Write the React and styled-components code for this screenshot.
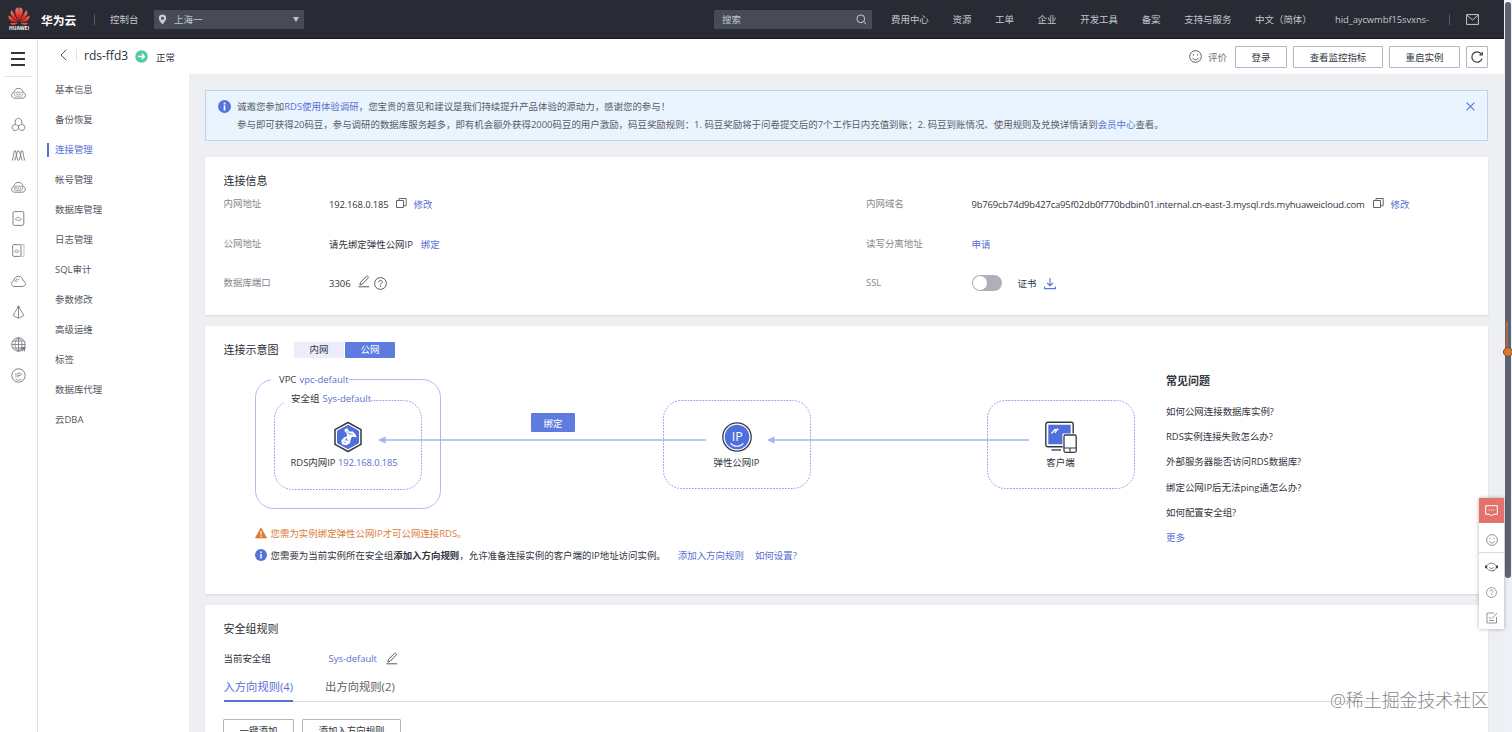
import React, { useState } from 'react';

// Libs
import styled, { createGlobalStyle, css } from 'styled-components';

const GlobalStyle = createGlobalStyle`
    * {
        box-sizing: border-box;
    }
    body {
        margin: 0;
        overflow: hidden;
        font-family: "Open Sans", "Noto Sans CJK SC", sans-serif;
        font-size: 9.45px;
        color: #32353d;
    }
    svg {
        display: block;
        flex: none;
    }
    button {
        font-family: inherit;
        padding: 0;
    }
`;

const navItems = ['费用中心', '资源', '工单', '企业', '开发工具', '备案', '支持与服务', '中文（简体）'];

const menuItems = [
    '基本信息', '备份恢复', '连接管理', '帐号管理', '数据库管理', '日志管理',
    'SQL审计', '参数修改', '高级运维', '标签', '数据库代理', '云DBA',
];

const questions = [
    '如何公网连接数据库实例?',
    'RDS实例连接失败怎么办?',
    '外部服务器能否访问RDS数据库?',
    '绑定公网IP后无法ping通怎么办?',
    '如何配置安全组?',
];

// Icons
const Icon = ({ w = 14, h = w, box, color = 'currentColor', sw = 1, children }) => (
    <svg width={w} height={h} viewBox={box || `0 0 ${w} ${h}`} fill="none" stroke={color} strokeWidth={sw}>
        {children}
    </svg>
);

const HuaweiLogo = () => (
    <svg width="22" height="24" viewBox="0 0 22 24">
        <defs>
            <linearGradient id="petal" x1="0" y1="0" x2="0" y2="1">
                <stop offset="0" stopColor="#f4866a" />
                <stop offset="0.6" stopColor="#dc3426" />
                <stop offset="1" stopColor="#c8201c" />
            </linearGradient>
        </defs>
        <g fill="url(#petal)">
            <path d="M10.6 14.6C8.4 10 7.2 6.5 7.3 3.6C7.4 1.8 8.7 .6 10.3 .5C11 3 11.2 9 10.6 14.6Z" />
            <path d="M11.4 14.6C13.6 10 14.8 6.5 14.7 3.6C14.6 1.8 13.3 .6 11.7 .5C11 3 10.8 9 11.4 14.6Z" />
            <path d="M9.9 15C8.5 11 6.3 6.8 3.7 3.2C2.4 4.5 2.3 6.2 3 7.7C4.3 10.3 6.9 13 9.9 15Z" />
            <path d="M12.1 15C13.5 11 15.7 6.8 18.3 3.2C19.6 4.5 19.7 6.2 19 7.7C17.7 10.3 15.1 13 12.1 15Z" />
            <path d="M9.4 15.6C6.8 13 3.9 10.4 .8 8.6C.2 10.2 .6 12.2 2.2 13.4C4 14.8 6.5 15.4 9.4 15.6Z" />
            <path d="M12.6 15.6C15.2 13 18.1 10.4 21.2 8.6C21.8 10.2 21.4 12.2 19.8 13.4C18 14.8 15.5 15.4 12.6 15.6Z" />
            <path d="M9.3 16.3H2C2.6 17.5 3.8 18.2 5.2 18.2C6.8 18.2 8.2 17.3 9.3 16.3Z" />
            <path d="M12.7 16.3H20C19.4 17.5 18.2 18.2 16.8 18.2C15.2 18.2 13.8 17.3 12.7 16.3Z" />
        </g>
        <text x="11" y="23" fill="#fff" fontSize="4.9" fontWeight="700" textAnchor="middle" textLength="20">HUAWEI</text>
    </svg>
);

const PinIcon = () => (
    <svg width="9" height="11" viewBox="0 0 9 11">
        <path fill="#c8cbd2" fillRule="evenodd" d="M4.5 .5A3.7 3.7 0 0 0 .8 4.2C.8 6.6 3 8.3 4.5 10.5C6 8.3 8.2 6.6 8.2 4.2A3.7 3.7 0 0 0 4.5 .5ZM4.5 2.7A1.5 1.5 0 1 1 4.5 5.7A1.5 1.5 0 0 1 4.5 2.7Z" />
    </svg>
);

const InfoIcon = ({ size = 12 }) => (
    <svg width={size} height={size} viewBox="0 0 12 12">
        <circle cx="6" cy="6" r="6" fill="#5573d9" />
        <path d="M6 2.4v1.7M6 5v4.6" stroke="#fff" strokeWidth="1.5" />
    </svg>
);

const WarnIcon = () => (
    <svg width="12" height="12" viewBox="0 0 12 12">
        <path d="M6 .8L11.7 11H.3Z" fill="#dd7a34" stroke="#dd7a34" strokeWidth=".6" strokeLinejoin="round" />
        <path d="M6 4v3.8M6 8.6v1.3" stroke="#fff" strokeWidth="1.2" />
    </svg>
);

const CopyIcon = () => (
    <Icon w={11} h={12} color="#62656d">
        <path d="M.5 3.5H7.5V10.5H.5Z" />
        <path d="M3 3.3V1.5H10.2V8.7H7.7" />
    </Icon>
);

const PencilIcon = () => (
    <Icon w={12} h={13} color="#575a63">
        <path d="M1.8 10L2.6 7.2L8.3 1.5C8.8 1 9.5 1 10 1.5C10.5 2 10.5 2.7 10 3.2L4.5 9L1.8 10Z" />
        <path d="M.5 11.8H11.2" />
    </Icon>
);

const HelpIcon = ({ size = 13, color = '#575a63' }) => (
    <Icon w={size} box="0 0 13 13" color={color}>
        <circle cx="6.5" cy="6.5" r="5.9" />
        <path d="M4.7 5.2C4.7 4 5.5 3.4 6.5 3.4C7.6 3.4 8.3 4.1 8.3 5C8.3 6.3 6.5 6.3 6.5 7.8M6.5 8.7V9.9" />
    </Icon>
);

const SmileIcon = ({ size = 12, color = '#575a63' }) => (
    <Icon w={size} box="0 0 12 12" color={color} sw={0.9}>
        <circle cx="6" cy="6" r="5.4" />
        <path d="M4 3.8v1.4M8 3.8v1.4M3.3 7.2C3.9 8.5 4.9 9 6 9C7.1 9 8.1 8.5 8.7 7.2" />
    </Icon>
);

const DownloadIcon = () => (
    <Icon w={12} h={13} color="#5573d9" sw={1.1}>
        <path d="M6 1V8.7M3.2 6L6 8.8L8.8 6M.7 9.5V11.6H11.3V9.5" />
    </Icon>
);

const railIcons = [
    // cloud servers
    <g key="ecs">
        <path d="M4 12.2C1.6 12.2 .6 10.6 .6 9.2C.6 7.6 1.8 6.6 2.9 6.4C3.2 4 5.2 2.3 7.5 2.3C9.8 2.3 11.8 4 12.1 6.4C13.2 6.6 14.4 7.6 14.4 9.2C14.4 10.6 13.4 12.2 11 12.2Z" />
        <path d="M5 6.2H10C11 6.2 11.5 7.2 11.5 8.2S11 10.2 10 10.2H5C4 10.2 3.5 9.2 3.5 8.2S4 6.2 5 6.2ZM5 8.2H10" strokeWidth=".6" />
    </g>,
    // three joined circles
    <g key="cluster">
        <path d="M5 7.6C4 6.5 4 5 4.3 4C4.9 2.2 6 1.3 7.5 1.3S10.1 2.2 10.7 4C11 5 11 6.5 10 7.6" />
        <path d="M5 7.6C2.6 7 1.1 8.8 1.1 10.4C1.1 12.2 2.5 13.5 4.2 13.5S7.5 12.2 7.5 10.4V8.8M10 7.6C12.4 7 13.9 8.8 13.9 10.4C13.9 12.2 12.5 13.5 10.8 13.5S7.5 12.2 7.5 10.4M5.6 8L7.5 8.9L9.4 8" />
    </g>,
    // waves
    <g key="waves">
        <path d="M.7 12.5C2.5 12.5 2.5 2.5 4 2.5S5.5 12.5 7.5 12.5S9.5 2.5 11 2.5S12.5 12.5 14.3 12.5" />
        <path d="M3 12.5C5 12.5 5.5 2.5 7.3 2.5S10 12.5 12 12.5" />
    </g>,
    <g key="rds">
        <path d="M4 12.2C1.6 12.2 .6 10.6 .6 9.2C.6 7.6 1.8 6.6 2.9 6.4C3.2 4 5.2 2.3 7.5 2.3C9.8 2.3 11.8 4 12.1 6.4C13.2 6.6 14.4 7.6 14.4 9.2C14.4 10.6 13.4 12.2 11 12.2Z" />
        <path d="M5 6.2H10C12.2 6.2 12.2 10.2 10 10.2H5C2.8 10.2 2.8 6.2 5 6.2ZM5 7.2V9.2M7 7.2V9.2M9.3 7.2V9.2" strokeWidth=".7" />
    </g>,
    <g key="bms">
        <rect x="2" y=".6" width="10.8" height="13.8" rx="1.5" />
        <path d="M5.4 9.2C4.2 9.2 4.3 7.5 5.4 7.4C5.9 5.7 8.9 5.7 9.4 7.4C10.5 7.5 10.6 9.2 9.4 9.2Z" strokeWidth=".7" />
    </g>,
    <g key="deh">
        <rect x="1.7" y="1.6" width="8.3" height="11.8" rx="1.2" />
        <path d="M4.2 9.2C3.4 9.2 3.4 7.8 4.3 7.7C4.6 6.4 6.8 6.4 7.1 7.7C8 7.8 8 9.2 7.2 9.2Z" strokeWidth=".7" />
        <path d="M10.5 1.6H13V13.4H10.5" strokeDasharray="1.5 .7" strokeWidth=".7" />
    </g>,
    <g key="cloud">
        <path d="M4 12.5C1.6 12.5 .6 10.9 .6 9.5C.6 7.9 1.8 6.9 2.9 6.7C3.2 4 5.2 2.3 7.5 2.3C9.8 2.3 11.8 4 12.1 6.7C13.2 6.9 14.4 7.9 14.4 9.5C14.4 10.9 13.4 12.5 11 12.5Z" />
        <path d="M4.5 7.5C4.6 6 5.5 5.2 6.6 5M5.5 7.8L6.3 7M7 6.3L8.5 4.8" />
    </g>,
    <g key="pyramid">
        <path d="M7.5 1.5L2 10.5L7.5 13.3L13 10.5ZM7.5 1.5V13.3" strokeWidth=".8" />
        <path d="M7.5 .8V3" strokeWidth="2" />
    </g>,
    <g key="globe">
        <circle cx="7.5" cy="7.5" r="6.7" />
        <path d="M7.5 .8V14.2M.8 7.5H14.2M1.8 4H13.2M1.8 11H13.2M7.5 .8C2.8 4 2.8 11 7.5 14.2C12.2 11 12.2 4 7.5 .8" strokeWidth=".8" />
        <path d="M10.5 10L11.3 13L12.3 10.8L13.3 13L14.2 10" strokeWidth="1.2" />
    </g>,
    <g key="ip">
        <circle cx="7.5" cy="7.5" r="6.7" />
        <path d="M5 5V9.5M7 9.5V5H9C10.8 5 10.8 7.6 9 7.6H7M4.5 11.3C6.5 12.3 8.5 12.3 10.5 11.3" strokeWidth=".7" />
    </g>,
];

const RdsIcon = () => (
    <svg width="30" height="32" viewBox="0 0 30 32">
        <path d="M15 1.5L28 8.6V23.4L15 30.5L2 23.4V8.6Z" fill="#fff" stroke="#343944" strokeWidth="1.5" strokeLinejoin="round" />
        <path d="M15 4.3L25.5 10V22L15 27.7L4.5 22V10Z" fill="#4f70dc" stroke="#4f70dc" strokeLinejoin="round" />
        <path d="M11.7 8L14.5 7.3L16 10.5L19.8 10.6L22.6 13.5L23.8 16.2L19 15.7L17.8 18L17 22L13.5 24.2L9 23.2L8.3 19.5L11 16.5L14.2 15.2L13.5 12L11.7 10.5Z" fill="#fff" />
        <path d="M13.5 10L17 13.5M15.5 13H20M10.5 20.5L13 22M12 18L15.5 19.5M13.8 17L12.6 20" stroke="#4f70dc" strokeWidth=".7" />
    </svg>
);

const EipIcon = () => (
    <svg width="30" height="32" viewBox="0 0 30 32">
        <circle cx="15" cy="16" r="14.2" fill="#fff" stroke="#343944" strokeWidth="1.3" />
        <circle cx="15" cy="16" r="12.3" fill="#4f70dc" />
        <text x="15.2" y="20" fontSize="12.5" fill="#fff" textAnchor="middle">IP</text>
        <path d="M8.5 22.3C12 26.2 18 26.2 21.5 22.3" fill="none" stroke="#fff" strokeWidth="1.2" />
    </svg>
);

const ClientIcon = () => (
    <svg width="32" height="32" viewBox="0 0 32 32">
        <rect x=".8" y="1.3" width="27.4" height="24.5" rx="2" fill="#fff" stroke="#343944" strokeWidth="1.4" />
        <path d="M3.3 3.8H25.7V13H17.5V23.3H3.3Z" fill="#4f70dc" />
        <path d="M6.5 12.5L10 8.5L11 9.5M10 12L12.5 8L13.2 9" stroke="#fff" strokeWidth="1.3" fill="none" />
        <path d="M6.5 29H16" stroke="#343944" strokeWidth="1.3" />
        <path d="M17.8 12.5H32V32H17.8Z" fill="#fff" />
        <rect x="19" y="14" width="12.2" height="17.3" rx="1.5" fill="#fff" stroke="#343944" strokeWidth="1.3" />
        <path d="M19 27H31.2M25 27V31" stroke="#343944" strokeWidth="1.1" />
    </svg>
);

const Arrow = ({ length }) => (
    <svg width={length} height="8" viewBox={`0 0 ${length} 8`}>
        <path d={`M6 4H${length}`} stroke="#a3b5f3" strokeWidth="1.4" />
        <path d="M0 4L7.5 .5V7.5Z" fill="#9fb2f3" />
    </svg>
);

const Outline = ({ w, h, dashed }) => (
    <svg width={w} height={h}>
        <rect
            x=".5"
            y=".5"
            width={w - 1}
            height={h - 1}
            rx="18"
            fill="none"
            stroke={dashed ? '#8f9fe6' : '#aebbf3'}
            strokeDasharray={dashed ? '1.7 1.3' : undefined}
        />
    </svg>
);

const Header = () => (
    <StyledHeader>
        <HuaweiLogo />
        <StyledBrand>华为云</StyledBrand>
        <StyledHeaderDivider />
        <StyledConsole>控制台</StyledConsole>
        <StyledRegion>
            <PinIcon />
            <span>上海一</span>
            <StyledCaret />
        </StyledRegion>
        <StyledSearch>
            <span>搜索</span>
            <Icon w={11} color="#c8cbd2"><circle cx="4.8" cy="4.8" r="3.9" /><path d="M7.6 7.6L10.3 10.3" /></Icon>
        </StyledSearch>
        <StyledNav>
            {navItems.map(item => <span key={item}>{item}</span>)}
        </StyledNav>
        <StyledUser>hid_aycwmbf15svxns-</StyledUser>
        <StyledHeaderDivider />
        <StyledMail>
            <Icon w={13} h={11} color="#c8cbd2"><path d="M.6 .6H12.4V10.4H.6ZM.9 1.2L6.5 6L12.1 1.2" /></Icon>
        </StyledMail>
    </StyledHeader>
);

const TitleBar = () => (
    <StyledTitleBar>
        <StyledBack>
            <Icon w={7} h={12} color="#4b4e57"><path d="M6.3 .8L1 6L6.3 11.2" /></Icon>
        </StyledBack>
        <StyledInstance>rds-ffd3</StyledInstance>
        <svg width="13" height="13" viewBox="0 0 13 13">
            <circle cx="6.5" cy="6.5" r="6.2" fill="#4fcb9c" />
            <path d="M3 6.5H9.6M6.8 3.7L9.6 6.5L6.8 9.3" fill="none" stroke="#fff" strokeWidth="1.3" />
        </svg>
        <StyledStatus>正常</StyledStatus>
        <SmileIcon size={13} />
        <StyledRate>评价</StyledRate>
        <StyledActions>
            <StyledOutlineButton $width={52}>登录</StyledOutlineButton>
            <StyledOutlineButton $width={90}>查看监控指标</StyledOutlineButton>
            <StyledOutlineButton $width={71}>重启实例</StyledOutlineButton>
            <StyledOutlineButton $width={22}>
                <Icon w={14} color="#32353d" sw={1.2}>
                    <path d="M12 8.6A5.2 5.2 0 1 1 11.2 3.9" />
                    <path d="M12.2 2V4.8H9.4" />
                </Icon>
            </StyledOutlineButton>
        </StyledActions>
    </StyledTitleBar>
);

const Notice = () => (
    <StyledNotice>
        <InfoIcon size={13} />
        <StyledNoticeText>
            <div>诚邀您参加<StyledLink>RDS使用体验调研</StyledLink>，您宝贵的意见和建议是我们持续提升产品体验的源动力，感谢您的参与！</div>
            <div>参与即可获得20码豆，参与调研的数据库服务越多，即有机会额外获得2000码豆的用户激励，码豆奖励规则：1. 码豆奖励将于问卷提交后的7个工作日内充值到账；2. 码豆到账情况、使用规则及兑换详情请到<StyledLink>会员中心</StyledLink>查看。</div>
        </StyledNoticeText>
        <StyledClose>
            <Icon w={9} color="#5573d9" sw={1.1}><path d="M.6 .6L8.4 8.4M8.4 .6L.6 8.4" /></Icon>
        </StyledClose>
    </StyledNotice>
);

const ConnectionInfo = () => (
    <StyledCard $height={158}>
        <StyledCardTitle>连接信息</StyledCardTitle>
        <StyledInfoGrid>
            <StyledLabel>内网地址</StyledLabel>
            <StyledValue><StyledTight>192.168.0.185</StyledTight><StyledGap $w={7} /><StyledLift><CopyIcon /></StyledLift><StyledGap $w={7} /><StyledLink>修改</StyledLink></StyledValue>
            <StyledLabel>内网域名</StyledLabel>
            <StyledValue><StyledDomain>9b769cb74d9b427ca95f02db0f770bdbin01.internal.cn-east-3.mysql.rds.myhuaweicloud.com</StyledDomain><StyledLift><CopyIcon /></StyledLift><StyledGap $w={7} /><StyledLink>修改</StyledLink></StyledValue>

            <StyledLabel>公网地址</StyledLabel>
            <StyledValue>请先绑定弹性公网IP<StyledGap $w={8} /><StyledLink>绑定</StyledLink></StyledValue>
            <StyledLabel>读写分离地址</StyledLabel>
            <StyledValue><StyledLink>申请</StyledLink></StyledValue>

            <StyledLabel>数据库端口</StyledLabel>
            <StyledValue>3306<StyledGap $w={7} /><StyledLift><PencilIcon /></StyledLift><StyledGap $w={4} /><HelpIcon /></StyledValue>
            <StyledLabel>SSL</StyledLabel>
            <StyledValue><StyledSwitch /><StyledGap $w={16} />证书<StyledGap $w={8} /><DownloadIcon /></StyledValue>
        </StyledInfoGrid>
    </StyledCard>
);

const Diagram = () => {
    const [network, setNetwork] = useState('公网');

    return (
        <StyledCard $height={268}>
            <StyledDiagramHead>
                <StyledCardTitle>连接示意图</StyledCardTitle>
                <StyledSegment>
                    {['内网', '公网'].map(name => (
                        <StyledSegmentButton key={name} $active={name === network} onClick={() => setNetwork(name)}>{name}</StyledSegmentButton>
                    ))}
                </StyledSegment>
            </StyledDiagramHead>
            <StyledDiagramBody>
                <div>
                    <StyledCanvas>
                        <StyledPlaced $x={31} $y={9}><Outline w={186} h={130} /></StyledPlaced>
                        <StyledBoxLabel $x={47} $y={3} $pad={8}>VPC <StyledLink>vpc-default</StyledLink></StyledBoxLabel>
                        <StyledPlaced $x={50} $y={30}><Outline w={148} h={90} dashed /></StyledPlaced>
                        <StyledBoxLabel $x={60} $y={22} $pad={7}>安全组 <StyledLink>Sys-default</StyledLink></StyledBoxLabel>
                        <StyledPlaced $x={439} $y={30}><Outline w={148} h={89} dashed /></StyledPlaced>
                        <StyledPlaced $x={763} $y={30}><Outline w={148} h={89} dashed /></StyledPlaced>
                        <StyledNode $x={53} $y={51} $shift={-7}><RdsIcon /><span>RDS内网IP <StyledLink><StyledTight>192.168.0.185</StyledTight></StyledLink></span></StyledNode>
                        <StyledNode $x={442} $y={51}><EipIcon /><span>弹性公网IP</span></StyledNode>
                        <StyledNode $x={766} $y={51}><ClientIcon /><span>客户端</span></StyledNode>
                        <StyledPlaced $x={154} $y={66}><Arrow length={328} /></StyledPlaced>
                        <StyledPlaced $x={543} $y={66}><Arrow length={262} /></StyledPlaced>
                        <StyledBindButton $x={307} $y={43}>绑定</StyledBindButton>
                    </StyledCanvas>
                    <StyledTip $warn><WarnIcon />您需为实例绑定弹性公网IP才可公网连接RDS。</StyledTip>
                    <StyledTip>
                        <InfoIcon />
                        <span>您需要为当前实例所在安全组<b>添加入方向规则</b>，允许准备连接实例的客户端的IP地址访问实例。</span>
                        <StyledTipLinks>
                            <StyledLink>添加入方向规则</StyledLink>
                            <StyledLink>如何设置?</StyledLink>
                        </StyledTipLinks>
                    </StyledTip>
                </div>
                <StyledFaq>
                    <StyledFaqTitle>常见问题</StyledFaqTitle>
                    {questions.map(question => <StyledQuestion key={question}>{question}</StyledQuestion>)}
                    <StyledQuestion><StyledLink>更多</StyledLink></StyledQuestion>
                </StyledFaq>
            </StyledDiagramBody>
        </StyledCard>
    );
};

const SecurityRules = () => {
    const [tab, setTab] = useState(0);

    return (
        <StyledCard $height={200}>
            <StyledCardTitle>安全组规则</StyledCardTitle>
            <StyledGroupRow>
                <StyledGroupLabel>当前安全组</StyledGroupLabel>
                <StyledLink>Sys-default</StyledLink>
                <StyledGap $w={9} />
                <PencilIcon />
            </StyledGroupRow>
            <StyledTabs>
                {['入方向规则(4)', '出方向规则(2)'].map((name, i) => (
                    <StyledTab key={name} $active={i === tab} onClick={() => setTab(i)}>{name}</StyledTab>
                ))}
            </StyledTabs>
            <StyledRuleActions>
                <StyledOutlineButton $width={71}>一键添加</StyledOutlineButton>
                <StyledOutlineButton $width={99}>添加入方向规则</StyledOutlineButton>
            </StyledRuleActions>
        </StyledCard>
    );
};

const FloatTools = () => (
    <StyledFloat>
        <StyledFloatItem $hot>
            <Icon w={13} h={12} color="#fff"><path d="M.7 .7H12.3V9.3H8L6.5 11L5 9.3H.7Z" /><path d="M3.5 5H4.7M5.9 5H7.1M8.3 5H9.5" /></Icon>
        </StyledFloatItem>
        <StyledFloatItem $h={30} $top={4} $line><SmileIcon size={12} color="#85888f" /></StyledFloatItem>
        <StyledFloatItem $h={27}>
            <Icon w={13} h={12} color="#6c6f77" sw={0.9}>
                <path d="M1.5 6C3 .8 10 .8 11.500 6C10 11 3 11 1.500 6Z" />
                <path d="M4.300 6.300C5.300 7.900 7.700 7.900 8.700 6.300M9.800 8.700L7.500 10.600" />
                <path d="M1 4.500V7.300M12 4.500V7.300" strokeWidth="1.800" stroke="#32353d" />
            </Icon>
        </StyledFloatItem>
        <StyledFloatItem><HelpIcon size={11} color="#85888f" /></StyledFloatItem>
        <StyledFloatItem>
            <Icon w={12} h={12} color="#85888f" sw={0.9}><path d="M8 1H1V11H10.500V5M6 6.500L11 1M3 6H5M3 8.500H8" /></Icon>
        </StyledFloatItem>
    </StyledFloat>
);

const App = () => {
    const [active, setActive] = useState('连接管理');

    return (
        <StyledPage>
            <GlobalStyle />
            <StyledMain>
                <Header />
                <StyledBody>
                    <StyledRail>
                        <StyledBurger><i /><i /><i /></StyledBurger>
                        {railIcons.map(icon => (
                            <StyledRailItem key={icon.key}><Icon w={15} color="#72757d" sw={0.9}>{icon}</Icon></StyledRailItem>
                        ))}
                    </StyledRail>
                    <StyledWorkspace>
                        <TitleBar />
                        <StyledColumns>
                            <StyledMenu>
                                {menuItems.map(item => (
                                    <StyledMenuItem key={item} $active={item === active} onClick={() => setActive(item)}>{item}</StyledMenuItem>
                                ))}
                            </StyledMenu>
                            <StyledContent>
                                <Notice />
                                <ConnectionInfo />
                                <Diagram />
                                <SecurityRules />
                            </StyledContent>
                        </StyledColumns>
                    </StyledWorkspace>
                </StyledBody>
            </StyledMain>
            <StyledTrack><StyledThumb /></StyledTrack>
            <FloatTools />
            <StyledMarker />
            <StyledWatermark>@稀土掘金技术社区</StyledWatermark>
        </StyledPage>
    );
};

export default App;

const StyledPage = styled.div`
    position: relative;
    display: flex;
    width: 1512px;
    height: 732px;
    overflow: hidden;
    background-color: #fff;
`;

const StyledMain = styled.div`
    width: 1504px;
    display: flex;
    flex-direction: column;
`;

const StyledHeader = styled.div`
    height: 39px;
    flex: none;
    display: flex;
    align-items: center;
    padding-left: 8px;
    background-color: #282b33;
    border-bottom: 1px solid #15171c;
    color: #c3c6cd;
    white-space: nowrap;
`;

const StyledBrand = styled.span`
    width: 52px;
    padding-left: 11px;
    font-size: 11.8px;
    font-weight: 700;
    color: #fff;
`;

const StyledHeaderDivider = styled.span`
    width: 1px;
    height: 11px;
    margin-left: 12px;
    background-color: #555962;
`;

const StyledConsole = styled.span`
    width: 44px;
    margin-left: 15px;
`;

const StyledRegion = styled.div`
    width: 150px;
    height: 19px;
    display: flex;
    align-items: center;
    gap: 7px;
    padding: 0 5px 0 4px;
    background-color: #464b57;
`;

const StyledCaret = styled.i`
    margin-left: auto;
    border: 3px solid transparent;
    border-top: 5px solid #c3c6cd;
    border-bottom: 0;
`;

const StyledSearch = styled.div`
    width: 158px;
    height: 19px;
    margin-left: 410px;
    display: flex;
    align-items: center;
    justify-content: space-between;
    padding: 0 5px 0 8px;
    background-color: #464b57;
`;

const StyledNav = styled.div`
    display: flex;
    gap: 23.7px;
    width: 445px;
    padding-left: 19px;
`;

const StyledUser = styled.span`
    width: 120px;
    padding-left: 18px;
    letter-spacing: -0.1px;
`;

const StyledMail = styled.div`
    margin-left: 16px;
`;

const StyledBody = styled.div`
    flex: 1;
    min-height: 0;
    display: flex;
`;

const StyledRail = styled.div`
    width: 38px;
    border-right: 1px solid #dcdde1;
    display: flex;
    flex-direction: column;
    align-items: center;
    padding-right: 1px;
`;

const StyledBurger = styled.div`
    width: 27px;
    height: 38px;
    flex: none;
    display: flex;
    flex-direction: column;
    align-items: center;
    gap: 4px;
    padding-top: 13px;
    margin-bottom: 0.5px;
    border-bottom: 1px solid #e3e4e7;

    i {
        width: 14px;
        height: 2px;
        background-color: #32353d;
    }
`;

const StyledRailItem = styled.div`
    height: 31.4px;
    flex: none;
    display: flex;
    align-items: center;
`;

const StyledWorkspace = styled.div`
    flex: 1;
    min-width: 0;
    display: flex;
    flex-direction: column;
`;

const StyledTitleBar = styled.div`
    height: 35px;
    flex: none;
    display: flex;
    align-items: center;
    padding: 0 16px 0 22px;
`;

const StyledBack = styled.div`
    width: 17px;
    height: 12px;
    margin-top: -4px;
    border-right: 1px solid #e0e1e5;
`;

const StyledInstance = styled.span`
    width: 58px;
    margin-top: -3px;
    padding-left: 7px;
    font-size: 12px;
    font-weight: 500;
    color: #2b2e36;
`;

const StyledStatus = styled.span`
    margin: 0 auto 0 8px;
`;

const StyledRate = styled.span`
    margin: 0 8px 0 6px;
    color: #6c6f77;
`;

const StyledActions = styled.div`
    display: flex;
    gap: 6px;
`;

const StyledOutlineButton = styled.button`
    width: ${props => props.$width}px;
    height: 22px;
    display: flex;
    align-items: center;
    justify-content: center;
    background-color: #fff;
    border: 1px solid #b3b6bc;
    border-radius: 1px;
    font-size: 9.45px;
    color: #32353d;
`;

const StyledColumns = styled.div`
    flex: 1;
    min-height: 0;
    display: flex;
`;

const StyledMenu = styled.div`
    width: 151px;
    flex: none;
    padding: 1px 0 0 9px;
`;

const StyledMenuItem = styled.div`
    height: 30px;
    line-height: 30px;
    padding-left: 8px;
    color: #52555e;
    cursor: pointer;

    ${props => props.$active && css`
        height: 14px;
        line-height: 14px;
        margin: 8px 0;
        padding-left: 6px;
        border-left: 2px solid #5573d9;
        color: #5573d9;
    `}
`;

const StyledContent = styled.div`
    flex: 1;
    display: flex;
    flex-direction: column;
    gap: 11px;
    padding: 16px 16px 0;
    background-color: #edeff2;
`;

const StyledNotice = styled.div`
    height: 51px;
    flex: none;
    margin-bottom: 5px;
    display: flex;
    align-items: flex-start;
    padding: 9px 12px 0;
    background-color: #eaf4fe;
    border: 1px solid #c0d0f0;
    color: #575d68;
    white-space: nowrap;
`;

const StyledNoticeText = styled.div`
    flex: 1;
    margin: -2px 0 0 6px;
    line-height: 18.4px;
`;

const StyledClose = styled.span`
    margin-top: 2px;
`;

const StyledLink = styled.span`
    color: #5a6fd0;
    cursor: pointer;
`;

const StyledCard = styled.div`
    height: ${props => props.$height}px;
    flex: none;
    padding: 14px 18.5px 0;
    background-color: #fff;
    box-shadow: 0 1px 2px rgba(0, 0, 0, 0.1);
`;

const StyledCardTitle = styled.div`
    height: 20px;
    line-height: 20px;
    font-size: 11px;
    color: #282b33;
`;

const StyledInfoGrid = styled.div`
    display: grid;
    grid-template-columns: 105.5px 537px 105.5px 1fr;
    grid-auto-rows: 39.6px;
    margin-top: -7px;
    white-space: nowrap;
`;

const StyledLabel = styled.div`
    line-height: 39px;
    color: #85888f;
`;

const StyledValue = styled.div`
    display: flex;
    align-items: center;
    height: 40px;
`;

const StyledGap = styled.span`
    width: ${props => props.$w}px;
`;

const StyledLift = styled.span`
    margin-top: -3px;
`;

const StyledTight = styled.span`
    letter-spacing: -0.14px;
`;

const StyledDomain = styled.span`
    width: 401px;
    letter-spacing: -0.16px;
`;

const StyledSwitch = styled.span`
    width: 30px;
    height: 16px;
    padding: 1px;
    border-radius: 8px;
    background-color: #adb0b8;

    &::before {
        content: '';
        display: block;
        width: 14px;
        height: 14px;
        border-radius: 50%;
        background-color: #fff;
    }
`;

const StyledDiagramHead = styled.div`
    display: flex;
    gap: 15.5px;
    align-items: center;
`;

const StyledSegment = styled.div`
    display: flex;
    gap: 1px;
`;

const StyledSegmentButton = styled.button`
    width: 50px;
    height: 16px;
    line-height: 16px;
    border: 0;
    border-radius: 1px;
    font-size: 9.45px;
    background-color: ${props => props.$active ? '#5e7ce0' : '#ebeefa'};
    color: ${props => props.$active ? '#fff' : '#32353d'};
`;

const StyledDiagramBody = styled.div`
    display: flex;
    white-space: nowrap;
`;

const StyledCanvas = styled.div`
    position: relative;
    width: 942.5px;
    height: 152px;
    margin-top: 10px;
`;

// every node sits at its own place on the canvas
const StyledPlaced = styled.div`
    position: absolute;
    left: ${props => props.$x + 0.5}px;
    top: ${props => props.$y}px;
`;

const StyledBoxLabel = styled(StyledPlaced)`
    line-height: 14px;
    padding-left: ${props => props.$pad}px;
    background-color: #fff;
    word-spacing: 0.8px;
`;

const StyledNode = styled(StyledPlaced)`
    width: 141px;
    display: flex;
    flex-direction: column;
    align-items: center;
    gap: 3px;
    line-height: 14px;

    span {
        margin-left: ${props => props.$shift || 0}px;
    }

    span span {
        margin-left: 0;
    }
`;

const StyledBindButton = styled(StyledPlaced).attrs({ as: 'button' })`
    width: 44px;
    height: 19px;
    border: 0;
    border-radius: 1px;
    background-color: #5e7ce0;
    color: #fff;
    font-size: 9.45px;
`;

const StyledTip = styled.div`
    height: 22px;
    display: flex;
    align-items: center;
    gap: 4px;
    padding-left: 31px;
    color: ${props => props.$warn ? '#d9803c' : '#32353d'};
`;

const StyledTipLinks = styled.div`
    display: flex;
    gap: 11px;
    margin-left: 8px;
`;

const StyledFaq = styled.div`
    padding-top: 9px;
`;

const StyledFaqTitle = styled.div`
    height: 30px;
    line-height: 24px;
    font-size: 11px;
    font-weight: 700;
`;

const StyledQuestion = styled.div`
    height: 25.2px;
    line-height: 25.2px;
`;

const StyledGroupRow = styled.div`
    display: flex;
    align-items: center;
    height: 38px;
`;

const StyledGroupLabel = styled.span`
    width: 105px;
`;

const StyledTabs = styled.div`
    height: 25px;
    display: flex;
    gap: 32px;
    border-bottom: 1px solid #dcdee3;
`;

const StyledTab = styled.div`
    height: 25px;
    line-height: 19px;
    font-size: 11.3px;
    white-space: nowrap;
    color: ${props => props.$active ? '#5a6fd0' : '#5b5e66'};
    border-bottom: ${props => props.$active ? '2px solid #5573d9' : '0'};
`;

const StyledRuleActions = styled.div`
    display: flex;
    gap: 8px;
    margin: 17px 0 0 -0.5px;
`;

const StyledTrack = styled.div`
    flex: 1;
    padding: 2px 0 0 1px;
    background-color: #eef0f6;
`;

const StyledThumb = styled.div`
    width: 6px;
    height: 576px;
    border-radius: 3px;
    background-color: #5d6373;
`;

const StyledFloat = styled.div`
    position: absolute;
    left: 1479px;
    top: 498px;
    width: 25px;
    height: 131px;
    background-color: #fff;
    box-shadow: 0 0 4px rgba(0, 0, 0, 0.3);
`;

const StyledFloatItem = styled.div`
    height: ${props => props.$h || 25}px;
    display: flex;
    align-items: center;
    justify-content: center;
    padding-top: ${props => props.$top || 0}px;
    background-color: ${props => props.$hot ? '#e3716c' : 'transparent'};
    border-bottom: ${props => props.$line ? '1px solid #d9dadd' : '0'};
`;

// orange slider handle over the scroll bar
const StyledMarker = styled.div`
    position: absolute;
    left: 1506px;
    top: 322px;
    width: 2px;
    height: 26px;
    background-color: #b5693a;

    &::after {
        content: '';
        position: absolute;
        left: -3px;
        top: 25px;
        width: 8px;
        height: 8px;
        border: 1px solid #6b4a35;
        border-radius: 50%;
        background-color: #d9782f;
    }
`;

const StyledWatermark = styled.div`
    position: absolute;
    left: 1330px;
    top: 687px;
    line-height: 26px;
    font-size: 17.9px;
    font-weight: 300;
    color: #85878b;
    white-space: nowrap;
    text-shadow: 0 0 1px #fff;
`;
